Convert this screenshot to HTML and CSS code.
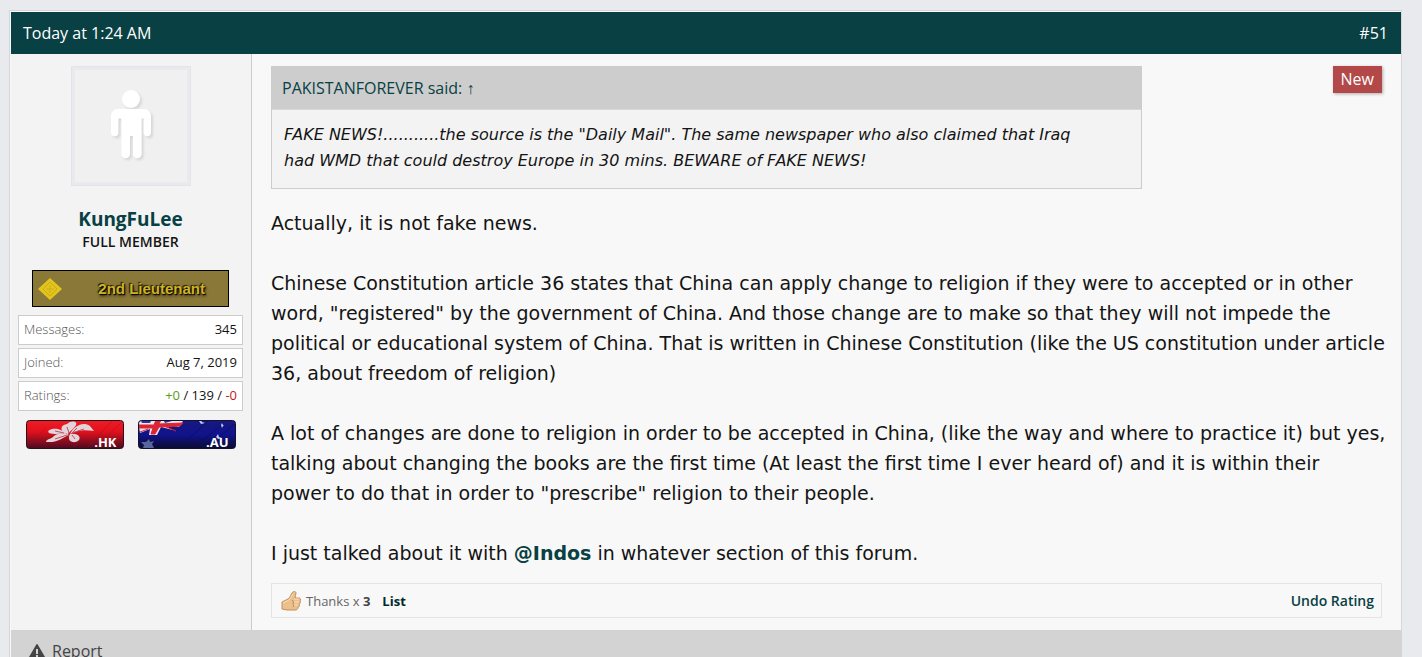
FILE: index.html
```html
<!DOCTYPE html>
<html lang="en">
<head>
  <meta charset="UTF-8">
  <meta name="viewport" content="width=device-width, initial-scale=1.0">
  <title>Thread - Post #51</title>
  <link rel="stylesheet" href="styles.css">
</head>
<body>
  <article class="message">
    <header class="message-header">
      <a href="#post-51" class="date">Today at 1:24 AM</a>
      <a href="#post-51" class="number">#51</a>
    </header>

    <div class="message-body">
      <aside class="user-info">
        <a href="#member" class="avatar" aria-label="KungFuLee">
          <svg width="110" height="110" viewBox="0 0 112 112">
            <g class="avatar-figure">
              <circle cx="56" cy="29" r="9"/>
              <path d="M43 39h25q8 0 8 8v15.500a3.700 3.700 0 0 1-7.400 0V48.500h-2V84a4.300 4.300 0 0 1-8.600 0V66h-3v18a4.300 4.300 0 0 1-8.600 0V48.500h-3v14a3.700 3.700 0 0 1-7.400 0V47q0-8 7-8z"/>
            </g>
          </svg>
        </a>
        <a href="#member" class="username">KungFuLee</a>
        <div class="user-title">FULL MEMBER</div>

        <div class="rank">
          <svg class="rank-icon" width="24" height="24" viewBox="0 0 24 24">
            <path fill="#e2c51c" d="M12 1l12 11-12 11L0 12z"/>
            <path fill="none" stroke="#cdac1c" d="M12 5l7 7-7 7-7-7zM12 8v8M8 12h8"/>
          </svg>
          <span>2nd Lieutenant</span>
        </div>

        <dl class="stats">
          <div class="stat"><dt>Messages:</dt><dd>345</dd></div>
          <div class="stat"><dt>Joined:</dt><dd>Aug 7, 2019</dd></div>
          <div class="stat"><dt>Ratings:</dt><dd><span class="positive">+0</span> / 139 / <span class="negative">-0</span></dd></div>
        </dl>

        <div class="flags">
          <div class="flag">
            <svg width="98" height="29" viewBox="0 0 98 29">
              <defs>
                <linearGradient id="hk" x1="0" y1="0" x2="0" y2="1">
                  <stop offset="0" stop-color="#ee1c24"/>
                  <stop offset=".4" stop-color="#e2101c"/>
                  <stop offset="1" stop-color="#4a0a20"/>
                </linearGradient>
              </defs>
              <rect x=".5" y=".5" width="97" height="28" rx="3" fill="url(#hk)" stroke="#2a1018"/>
              <path d="M62 27L86 1M74 22L95 3M4 24L20 8M48 27l8-9" stroke="#a80f1c" stroke-opacity=".5"/>
              <g fill="#e4d3d8">
                <path d="M42 14c-8-1-9-9-1-10 4-4 11-3 9 1-1 3-5 5-8 9z"/>
                <path d="M44 14c4-8 13-13 20-8l4 5c-8-1-16-2-24 3z"/>
                <path d="M44 14c8-1 11 3 9 6-5 5-13 1-9-6z"/>
                <path d="M43 15c-6 2-10 8-23 7 0-3 6-3 8-6 4-3 11-3 15-1z"/>
                <path d="M41 14c-5-1-12 1-18-1-3-3 4-5 9-4 4 1 6 3 9 5z"/>
              </g>
              <path d="M43 13l-2-6M45 14l6-6M46 13l12-4M46 15l3 4M41 15l-12 4M38 13l-9-2" stroke="#bb5366" fill="none"/>
            </svg>
            <span>.HK</span>
          </div>
          <div class="flag">
            <svg width="98" height="29" viewBox="0 0 98 29">
              <defs>
                <linearGradient id="au" x1="0" y1="0" x2="0" y2="1">
                  <stop offset="0" stop-color="#18187f"/>
                  <stop offset=".5" stop-color="#10138c"/>
                  <stop offset="1" stop-color="#0b0b30"/>
                </linearGradient>
                <clipPath id="auClip"><rect x="1" y="1" width="96" height="27" rx="3"/></clipPath>
              </defs>
              <rect x=".5" y=".5" width="97" height="28" rx="3" fill="url(#au)" stroke="#12122e"/>
              <g clip-path="url(#auClip)">
                <path d="M0 1h45l-4 6-5-1-11-1 10 5-12-3-4 8h-8l1-6-10 4z" fill="#f0e4ea"/>
                <path d="M1 5h15L18 0h5l-2 4 24-1-3 3-21 1-4 7h-4l2-6H1zM26 6l12 5M2 12l8-3" fill="#dc2434" stroke="#dc2434"/>
                <path d="M3 1h10l-1 2H4zM26 1l8 0-7 2z" fill="#29389b"/>
                <path d="M44 25L70 1M58 26L86 3M77 21L96 4" stroke="#070b65" stroke-opacity=".6"/>
                <path d="M11 19l1 3 4-1-2 3 2 4H5l1-3-3-3 5 0z" fill="#59659b"/>
                <path d="M63 0l1 2 3 1-4 1-2-3zM84 3l1 2 1 0-1 1-1 2-1-3zM80 14l1 3 3 1-4 1-2-2z" fill="#c2c9ed"/>
              </g>
            </svg>
            <span>.AU</span>
          </div>
        </div>
      </aside>

      <div class="message-content">
        <span class="new-label">New</span>

        <blockquote class="quote">
          <div class="quote-author">PAKISTANFOREVER said: <a href="#source">↑</a></div>
          <div class="quote-text">FAKE NEWS!...........the source is the "Daily Mail". The same newspaper who also claimed that Iraq<br>
            had WMD that could destroy Europe in 30 mins. BEWARE of FAKE NEWS!</div>
        </blockquote>

        <div class="message-text">
          <p>Actually, it is not fake news.</p>
          <p>Chinese Constitution article 36 states that China can apply change to religion if they were to accepted or in other<br>
            word, "registered" by the government of China. And those change are to make so that they will not impede the<br>
            political or educational system of China. That is written in Chinese Constitution (like the US constitution under article<br>
            36, about freedom of religion)</p>
          <p>A lot of changes are done to religion in order to be accepted in China, (like the way and where to practice it) but yes,<br>
            talking about changing the books are the first time (At least the first time I ever heard of) and it is within their<br>
            power to do that in order to "prescribe" religion to their people.</p>
          <p>I just talked about it with <a href="#indos">@Indos</a> in whatever section of this forum.</p>
        </div>

        <div class="ratings">
          <svg width="20" height="20" viewBox="0 0 20 20">
            <path d="M1 11l4-2c3-1 4-3 6-7 1-2 4-2 4 0 0 2-1 3-1 5h4c2 0 2 3 1 3 1 1 0 3-1 3 1 2 0 3-1 3 0 2-1 3-3 3H6l-5-1z" fill="#ecc08d" stroke="#c08f5c"/>
            <path d="M2 12l4-2c3-1 4-4 6-7M13 8h5M12 11h6M12 14h5" stroke="#f8dcb4" fill="none"/>
            <path d="M12 9c-1 1 0 2 1 2-2 1-1 2 0 3-1 1-1 2 0 2" stroke="#b98351" fill="none"/>
          </svg>
          <span class="rating-type">Thanks x <strong>3</strong></span>
          <a href="#list" class="rating-list">List</a>
          <button type="button" class="undo">Undo Rating</button>
        </div>
      </div>
    </div>

    <footer class="message-footer">
      <a href="#report" class="report">
        <svg width="16" height="15" viewBox="0 0 16 15">
          <path d="M7 1q1-2 2 0l7 12q0 2-1 2H1q-1 0-1-2z" fill="#444"/>
          <path d="M7 5h2v5H7zM7 11h2v2H7z" fill="#d3d3d3"/>
        </svg>
        Report
      </a>
    </footer>
  </article>
</body>
</html>
```
FILE: styles.css
```css
:root {
  --primary: #084043;
  --border: #cccccc;
  --text: #141414;
  --muted: #666666;
}

* {
  box-sizing: border-box;
}

html {
  height: 100%;
  overflow: hidden;
}

body {
  margin: 0;
  padding: 10px 20px 0 9px;
  height: 100%;
  overflow: hidden;
  background-color: #e9eaee;
  color: var(--text);
  font-family: "Open Sans", sans-serif;
  font-size: 13px;
}

a {
  color: var(--primary);
  text-decoration: none;
}

.message {
  background-color: #f8f8f8;
  border: 1px solid #d4d6d9;
  padding: 1px 0 0 1px;
}

.message-header {
  display: flex;
  justify-content: space-between;
  align-items: center;
  height: 42px;
  padding: 0 13px 0 12px;
  background-color: var(--primary);
  font-size: 16px;
}

.message-header a {
  color: #fff;
}

.message-body {
  display: flex;
}

.user-info {
  display: flex;
  flex-direction: column;
  align-items: center;
  flex: 0 0 241px;
  padding: 12px 8px 0 7px;
  background-color: #f3f3f3;
  border-right: 1px solid var(--border);
}

.avatar {
  display: flex;
  justify-content: center;
  align-items: center;
  width: 120px;
  height: 120px;
  border: 1px solid #e3e4e6;
  background-color: #e9eaee;
}

.avatar svg {
  width: 112px;
  height: 112px;
  background-color: #f0f0f0;
}

.avatar-figure {
  fill: #fff;
  filter: drop-shadow(2px 2px 1px rgba(0, 0, 0, 0.1));
}

.username {
  margin-top: 20px;
  font-size: 19px;
  font-weight: bold;
  line-height: 26px;
}

.user-title {
  font-size: 14px;
  font-weight: 600;
  line-height: 20px;
}

.rank {
  display: flex;
  justify-content: space-between;
  align-items: center;
  width: 197px;
  height: 37px;
  margin: 18px 0 8px;
  padding: 0 23px 0 5px;
  border: 1px solid #000;
  background-color: #8a7838;
  color: #cfb324;
  font-family: "Liberation Sans", sans-serif;
  font-size: 15px;
  font-weight: bold;
  text-shadow: 1px 1px 1px #000, -1px -1px 1px #211b05, 1px 2px 3px #2b240c;
}

.stats {
  display: flex;
  flex-direction: column;
  gap: 3px;
  width: 100%;
  margin: 0;
}

.stat {
  display: flex;
  justify-content: space-between;
  height: 30px;
  padding: 0 5px;
  background-color: #fff;
  border: 1px solid var(--border);
  line-height: 26px;
}

.stat dt {
  color: #555;
  font-weight: 300;
}

.stat dd {
  margin: 0;
}

.positive {
  color: #5b9a1c;
}

.negative {
  color: #c4161c;
}

.flags {
  display: flex;
  gap: 14px;
  margin-top: 9px;
}

.flag {
  position: relative;
  height: 29px;
}

.flag span {
  position: absolute;
  right: 7px;
  bottom: 0;
  color: #fff;
  font-weight: bold;
  line-height: 14px;
}

.message-content {
  position: relative;
  flex: 1;
  min-width: 0;
  padding: 12px 19px;
}

.new-label {
  position: absolute;
  top: 12px;
  right: 19px;
  padding: 0 8px;
  background-color: #b34848;
  box-shadow: 1px 1px 3px rgba(0, 0, 0, 0.3);
  color: #fff;
  font-size: 16px;
  line-height: 27px;
}

.quote {
  margin: 0 240px 19px 0;
  border: 1px solid var(--border);
  background-color: #f3f3f3;
}

.quote-author {
  padding: 0 10px;
  border-bottom: 1px solid #d8d8d8;
  background-color: #cdcdcd;
  color: var(--primary);
  font-size: 16px;
  line-height: 42px;
}

.quote-text {
  padding: 12px 12px 14px;
  font-family: Verdana, "DejaVu Sans", sans-serif;
  font-size: 16px;
  font-style: italic;
  line-height: 26px;
}

/* long lines may run into the right padding */
.message-text {
  margin-right: -19px;
  font-family: Verdana, "DejaVu Sans", sans-serif;
  font-size: 19px;
  line-height: 30px;
}

.message-text p {
  margin: 0 0 30px;
}

.message-text p:last-child {
  margin-bottom: 15px;
}

.message-text a {
  font-weight: bold;
}

.ratings {
  display: flex;
  align-items: center;
  height: 35px;
  padding: 0 7px 0 9px;
  border: 1px solid #e4e4e4;
}

.rating-type {
  margin-left: 5px;
  color: var(--muted);
}

.rating-type strong {
  color: #444;
}

.rating-list {
  margin-left: 12px;
  color: #00282b;
  font-weight: bold;
}

.undo {
  margin-left: auto;
  padding: 0;
  border: none;
  background: none;
  color: var(--primary);
  font-family: inherit;
  font-size: 14px;
  font-weight: 600;
  cursor: pointer;
}

.message-footer {
  padding: 8px 18px;
  background-color: #d3d3d3;
}

.report {
  display: inline-flex;
  align-items: center;
  gap: 7px;
  color: #444;
  font-size: 16px;
  line-height: 26px;
}
```
